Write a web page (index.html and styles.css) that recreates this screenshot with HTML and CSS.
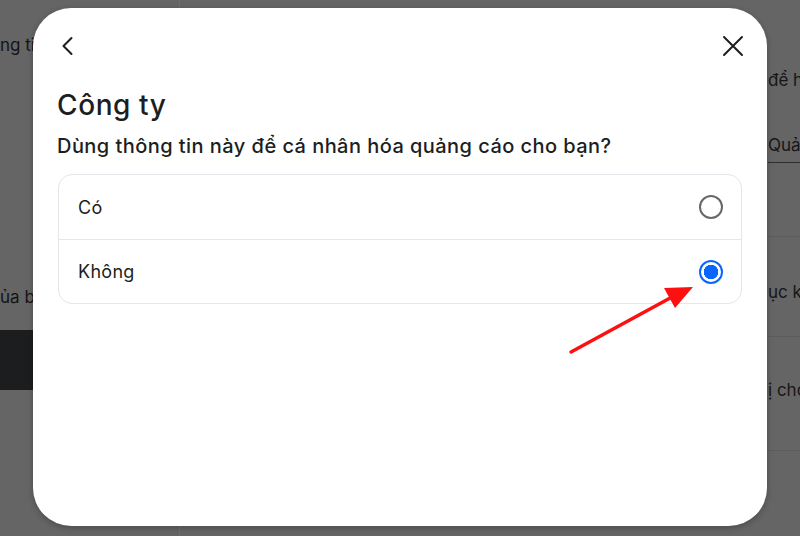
FILE: index.html
```html
<!DOCTYPE html>
<html lang="vi">
<head>
<meta charset="utf-8">
<link rel="stylesheet" href="styles.css">
</head>
<body>
<div class="page">
  <div class="bg">
    <aside class="bg-side">
      <p class="bg-line bg-line-1">ng tin của bạn</p>
      <p class="bg-line bg-line-2">ủa bạn</p>
      <div class="bg-dark"></div>
    </aside>
    <main class="bg-main">
      <div class="bg-right">
        <p class="bg-r bg-r-1">để hiển thị quảng cáo</p>
        <p class="bg-r bg-r-2">Quản lý</p>
        <div class="bg-row bg-row-a"></div>
        <p class="bg-r bg-r-3">ục khác</p>
        <div class="bg-row bg-row-b"></div>
        <p class="bg-r bg-r-4">ị cho bạn</p>
        <div class="bg-row bg-row-c"></div>
      </div>
    </main>
  </div>

  <div class="modal">
    <div class="modal-head">
      <button class="icon-btn" aria-label="Quay lại">
        <svg width="24" height="24" viewBox="0 0 24 24"><path d="M14.5 4.5 6.5 12.5l8 8" fill="none" stroke="#1c1e21" stroke-width="2" stroke-linecap="round" stroke-linejoin="round" transform="translate(0 -0.5)"/></svg>
      </button>
      <button class="icon-btn" aria-label="Đóng">
        <svg width="24" height="24" viewBox="0 0 24 24"><path d="M3 3l18 18M21 3 3 21" fill="none" stroke="#1c1e21" stroke-width="2" stroke-linecap="round"/></svg>
      </button>
    </div>
    <div class="modal-body">
      <h1 class="title">Công ty</h1>
      <p class="question">Dùng thông tin này để cá nhân hóa quảng cáo cho bạn?</p>
      <div class="options">
        <label class="option">
          <span class="option-label">Có</span>
          <span class="radio"></span>
        </label>
        <label class="option">
          <span class="option-label">Không</span>
          <span class="radio radio-on"></span>
        </label>
      </div>
    </div>
  </div>

  <svg class="arrow" width="140" height="80" viewBox="0 0 140 80">
    <line x1="11" y1="72" x2="112" y2="17" stroke="#ff1010" stroke-width="3.5" stroke-linecap="round"/>
    <polygon points="133,7 104,8 115,28" fill="#ff1010"/>
  </svg>
</div>
</body>
</html>
```

FILE: styles.css
```css
* { box-sizing: border-box; }
html, body { margin: 0; padding: 0; }
body {
  background: #656565;
  font-family: Inter, "Noto Sans", sans-serif;
  color: #1c1e21;
}
.page {
  position: relative;
  width: 800px;
  height: 536px;
  overflow: hidden;
}
.bg {
  display: flex;
  height: 100%;
}
.bg-side {
  width: 180px;
  border-right: 1px solid #6e6e6e;
  display: flex;
  flex-direction: column;
}
.bg-line {
  margin: 0;
  font-size: 17px;
  color: #141414;
  white-space: nowrap;
  line-height: 22px;
}
.bg-line-1 { margin-top: 34px; }
.bg-line-2 { margin-top: 230px; }
.bg-dark {
  margin-top: 22px;
  height: 60px;
  background: #1c1d1f;
}
.bg-main {
  flex: 1;
  display: flex;
  justify-content: flex-end;
}
.bg-right {
  width: 32px;
  display: flex;
  flex-direction: column;
}
.bg-r {
  margin: 0;
  font-size: 17px;
  line-height: 22px;
  color: #161616;
  white-space: nowrap;
}
.bg-r-1 { margin-top: 69px; }
.bg-r-2 {
  margin-top: 43px;
  padding-bottom: 6px;
  border-bottom: 1px solid #2e2e2e;
  width: 32px;
  overflow: visible;
}
.bg-row { height: 1px; background: #5c5c5c; }
.bg-row-a { margin-top: 73px; }
.bg-r-3 { margin-top: 44px; }
.bg-row-b { margin-top: 33px; }
.bg-r-4 { margin-top: 42px; }
.bg-row-c { margin-top: 49px; }

.modal {
  position: absolute;
  left: 33px;
  top: 8px;
  width: 734px;
  height: 518px;
  background: #fff;
  border-radius: 38px;
  box-shadow: 0 2px 6px rgba(0,0,0,0.25);
}
.modal-head {
  display: flex;
  justify-content: space-between;
  align-items: center;
  padding: 26px 22px 0 24px;
  height: 50px;
}
.icon-btn {
  border: 0;
  padding: 0;
  background: none;
  width: 24px;
  height: 24px;
  display: flex;
}
.modal-body {
  padding: 0 24px;
}
.title {
  margin: 30px 0 0;
  font-size: 28px;
  font-weight: 500;
  line-height: 34px;
  letter-spacing: 0.6px;
}
.question {
  margin: 12px 0 0;
  font-size: 20px;
  font-weight: 500;
  line-height: 25px;
  letter-spacing: 0.45px;
}
.options {
  margin: 15px 1px 0;
  border: 1px solid #e4e6eb;
  border-radius: 14px;
}
.option {
  display: flex;
  align-items: center;
  justify-content: space-between;
  height: 64px;
  padding: 0 18px 0 19px;
}
.option + .option { border-top: 1px solid #e4e6eb; }
.option-label {
  font-size: 18px;
  letter-spacing: 0.3px;
  color: #1c1e21;
}
.radio {
  width: 24px;
  height: 24px;
  border-radius: 50%;
  border: 2px solid #65676b;
}
.radio-on {
  border-color: #0866ff;
  background: radial-gradient(circle, #0866ff 0 7px, #fff 7.5px);
}
.arrow {
  position: absolute;
  left: 560px;
  top: 280px;
}
```
